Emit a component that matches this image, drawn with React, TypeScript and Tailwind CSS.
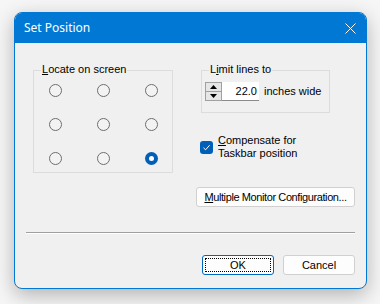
import React from "react";

const body = { fontFamily: '"Liberation Sans", Arial, sans-serif' };

function Radio({ checked }: { checked?: boolean }) {
    if (checked) {
        return (
            <span className="flex h-[13px] w-[13px] items-center justify-center rounded-full bg-[#005fb8]">
                <span className="h-[5px] w-[5px] rounded-full bg-white" />
            </span>
        );
    }
    return <span className="block h-[13px] w-[13px] rounded-full border border-[#6e6e6e] bg-[#f3f3f3]" />;
}

function Btn({ children, focused, className = "" }: { children: React.ReactNode; focused?: boolean; className?: string }) {
    return (
        <div
            className={`flex h-[20px] items-center justify-center rounded-[3px] border bg-[#fdfdfd] text-[11px] text-black ${
                focused ? "border-[#0067c0] p-[2px]" : "border-[#d0d0d0]"
            } ${className}`}
        >
            {focused ? (
                <div className="flex h-full w-full items-center justify-center border border-dotted border-black">{children}</div>
            ) : (
                children
            )}
        </div>
    );
}

export default function App() {
    const cells = [0, 1, 2, 3, 4, 5, 6, 7, 8];

    return (
        <div className="h-[304px] w-[380px] bg-[#f6f6f6] pl-[14px] pt-[12px]" style={body}>
            <div className="flex h-[277px] w-[353px] flex-col overflow-hidden rounded-[8px] border border-[#0078d4] bg-[#f0f0f0] shadow-[0_6px_20px_rgba(0,0,0,0.28)]">
                {/* Title bar */}
                <div className="flex h-[30px] shrink-0 items-center justify-between bg-[#0078d4] pl-[9px] pr-[9px]">
                    <span className="text-[12px] text-white" style={{ fontFamily: '"Noto Sans", "Open Sans", sans-serif' }}>
                        Set Position
                    </span>
                    <svg width="11" height="11" viewBox="0 0 11 11" className="mr-[1px]">
                        <path d="M0.5 0.5 L10.5 10.5 M10.5 0.5 L0.5 10.5" stroke="white" strokeWidth="1" fill="none" />
                    </svg>
                </div>

                {/* Body */}
                <div className="flex flex-1 flex-col pl-[11px] pr-[11px] pt-[27px] text-[11px] leading-[13px] text-black">
                    <div className="flex pl-[7px]">
                        {/* Locate on screen */}
                        <div className="relative h-[103px] w-[140px] shrink-0 border border-[#dcdcdc]">
                            <span className="absolute left-[7px] top-[-8px] bg-[#f0f0f0] px-[1px]">
                                <span className="underline">L</span>ocate on screen
                            </span>
                            <div className="grid grid-cols-[48px_48px_48px] grid-rows-[34px_34px_34px] pl-[15px] pt-[13px]">
                                {cells.map((i) => (
                                    <div key={i}>
                                        <Radio checked={i === 8} />
                                    </div>
                                ))}
                            </div>
                        </div>

                        {/* Right column */}
                        <div className="ml-[27px] flex flex-col">
                            <div className="relative ml-[1px] h-[43px] w-[129px] border border-[#dcdcdc]">
                                <span className="absolute left-[7px] top-[-8px] bg-[#f0f0f0] px-[1px]">
                                    L<span className="underline">i</span>mit lines to
                                </span>
                                <div className="flex items-center pl-[3px] pt-[11px]">
                                    <div className="flex h-[19px] w-[17px] flex-col border border-[#a0a0a0] bg-[#e6e6e6]">
                                        <div className="flex flex-1 items-center justify-center border-b border-[#a0a0a0]">
                                            <svg width="7" height="4" viewBox="0 0 7 4">
                                                <path d="M0 4 L3.5 0 L7 4 Z" fill="#000" />
                                            </svg>
                                        </div>
                                        <div className="flex flex-1 items-center justify-center">
                                            <svg width="7" height="4" viewBox="0 0 7 4">
                                                <path d="M0 0 L3.5 4 L7 0 Z" fill="#000" />
                                            </svg>
                                        </div>
                                    </div>
                                    <div className="flex h-[19px] w-[37px] items-center justify-end border-b border-[#8a8a8a] bg-white pr-[2px]">
                                        22.0
                                    </div>
                                    <span className="ml-[5px]">inches wide</span>
                                </div>
                            </div>

                            <div className="mt-[21px] flex items-center">
                                <span className="flex h-[13px] w-[13px] shrink-0 items-center justify-center rounded-[3px] bg-[#005fb8]">
                                    <svg width="9" height="9" viewBox="0 0 9 9">
                                        <path d="M1.5 4.8 L3.6 6.8 L7.6 2.2" stroke="white" strokeWidth="1" fill="none" />
                                    </svg>
                                </span>
                                <div className="ml-[5px]">
                                    <div>
                                        <span className="underline">C</span>ompensate for
                                    </div>
                                    <div>Taskbar position</div>
                                </div>
                            </div>
                        </div>
                    </div>

                    <div className="mt-[14px] flex justify-end">
                        <Btn className="w-[159px]">
                            <span className="tracking-[-0.4px]">
                                <span className="underline">M</span>ultiple Monitor Configuration...
                            </span>
                        </Btn>
                    </div>

                    <div className="mt-[25px] border-b border-t border-b-white border-t-[#a0a0a0]" />

                    <div className="mt-[21px] flex justify-end gap-[9px]">
                        <Btn focused className="w-[72px]">
                            OK
                        </Btn>
                        <Btn className="w-[72px]">Cancel</Btn>
                    </div>
                </div>
            </div>
        </div>
    );
}
